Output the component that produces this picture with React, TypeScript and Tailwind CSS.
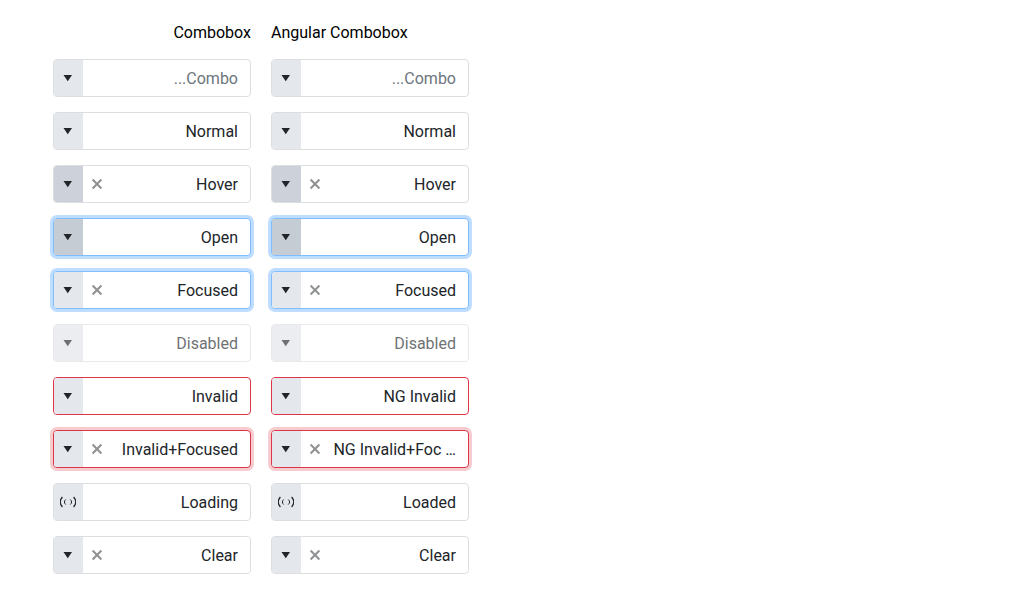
import { clsx } from "clsx";

type State =
  | "normal"
  | "hover"
  | "open"
  | "focused"
  | "disabled"
  | "invalid"
  | "invalidFocused"
  | "loading";

interface Item {
  text: string;
  state: State;
  clearable?: boolean;
  placeholder?: boolean;
}

const frameStyles: Record<State, string> = {
  normal: "border-[#dcdee0]",
  hover: "border-[#dcdee0]",
  open: "border-[#80bdff] shadow-[0_0_0_3px_#bfdeff]",
  focused: "border-[#80bdff] shadow-[0_0_0_3px_#bfdeff]",
  disabled: "border-[#dcdee0] opacity-65",
  invalid: "border-[#dc3545]",
  invalidFocused: "border-[#dc3545] shadow-[0_0_0_3px_#f6ccd0]",
  loading: "border-[#dcdee0]",
};

const buttonStyles: Record<State, string> = {
  normal: "bg-[#e4e7eb]",
  hover: "bg-[#cdd1da]",
  open: "bg-[#c6ccd3]",
  focused: "bg-[#e4e7eb]",
  disabled: "bg-[#e2e4ea]",
  invalid: "bg-[#e4e7eb]",
  invalidFocused: "bg-[#e4e7eb]",
  loading: "bg-[#e4e7eb]",
};

const columns: { title: string; align: string; items: Item[] }[] = [
  {
    title: "Combobox",
    align: "text-right",
    items: [
      { text: "...Combo", state: "normal", placeholder: true },
      { text: "Normal", state: "normal" },
      { text: "Hover", state: "hover", clearable: true },
      { text: "Open", state: "open" },
      { text: "Focused", state: "focused", clearable: true },
      { text: "Disabled", state: "disabled" },
      { text: "Invalid", state: "invalid" },
      { text: "Invalid+Focused", state: "invalidFocused", clearable: true },
      { text: "Loading", state: "loading" },
      { text: "Clear", state: "normal", clearable: true },
    ],
  },
  {
    title: "Angular Combobox",
    align: "text-left",
    items: [
      { text: "...Combo", state: "normal", placeholder: true },
      { text: "Normal", state: "normal" },
      { text: "Hover", state: "hover", clearable: true },
      { text: "Open", state: "open" },
      { text: "Focused", state: "focused", clearable: true },
      { text: "Disabled", state: "disabled" },
      { text: "NG Invalid", state: "invalid" },
      { text: "NG Invalid+Foc …", state: "invalidFocused", clearable: true },
      { text: "Loaded", state: "loading" },
      { text: "Clear", state: "normal", clearable: true },
    ],
  },
];

function ArrowIcon() {
  return (
    <svg className="size-4" viewBox="0 0 16 16" fill="currentColor" aria-hidden="true">
      <path d="M3.5 5h8.5l-4.25 6.2z" />
    </svg>
  );
}

function ClearIcon() {
  return (
    <svg className="size-4" viewBox="0 0 16 16" fill="none" stroke="currentColor" strokeWidth="2.1" aria-hidden="true">
      <path d="M3.6 3.6l8.8 8.8M12.4 3.6l-8.8 8.8" />
    </svg>
  );
}

function LoadingIcon() {
  return (
    <svg className="size-4" viewBox="0 0 16 16" fill="none" stroke="currentColor" strokeWidth="1.2" aria-hidden="true">
      <path d="M2.4 3C-.2 6-.2 10 2.4 13M13.6 3c2.6 3 2.6 7 0 10" />
      <path d="M5.7 5.5c-1.7 1.4-1.7 3.6 0 5M10.3 5.5c1.7 1.4 1.7 3.6 0 5" strokeWidth="1" />
    </svg>
  );
}

function Combobox({ item, label }: { item: Item; label: string }) {
  const { text, state, clearable, placeholder } = item;
  const disabled = state === "disabled";
  return (
    <div
      className={clsx(
        "flex h-[38px] overflow-hidden rounded border bg-white text-[#212529]",
        frameStyles[state],
      )}
    >
      <button
        type="button"
        aria-label={`Toggle ${label}`}
        disabled={disabled}
        className={clsx("flex w-[29px] shrink-0 items-center justify-center pr-0.5", buttonStyles[state])}
      >
        {state === "loading" ? <LoadingIcon /> : <ArrowIcon />}
      </button>
      {clearable && (
        <button
          type="button"
          aria-label={`Clear ${label}`}
          className="flex w-7 shrink-0 items-center justify-center text-[#909294]"
        >
          <ClearIcon />
        </button>
      )}
      <input
        type="text"
        role="combobox"
        aria-expanded={state === "open"}
        aria-label={label}
        aria-invalid={state === "invalid" || state === "invalidFocused"}
        disabled={disabled}
        defaultValue={placeholder ? undefined : text}
        placeholder={placeholder ? text : undefined}
        className="w-full min-w-0 flex-1 bg-transparent pt-0.5 pr-3 text-right text-base outline-none placeholder:text-[#6c757d]"
      />
    </div>
  );
}

export default function App() {
  return (
    <main className="min-h-screen bg-white px-[53px] py-5 font-['Roboto',sans-serif] text-base text-black">
      <div className="grid max-w-[416px] grid-cols-2 gap-5">
        {columns.map((column) => (
          <section key={column.title} className="flex flex-col gap-[15px]">
            <h2 className={clsx("pt-0.5 leading-[22px]", column.align)}>{column.title}</h2>
            {column.items.map((item, index) => (
              <Combobox key={index} item={item} label={`${column.title} ${index + 1}`} />
            ))}
          </section>
        ))}
      </div>
    </main>
  );
}
